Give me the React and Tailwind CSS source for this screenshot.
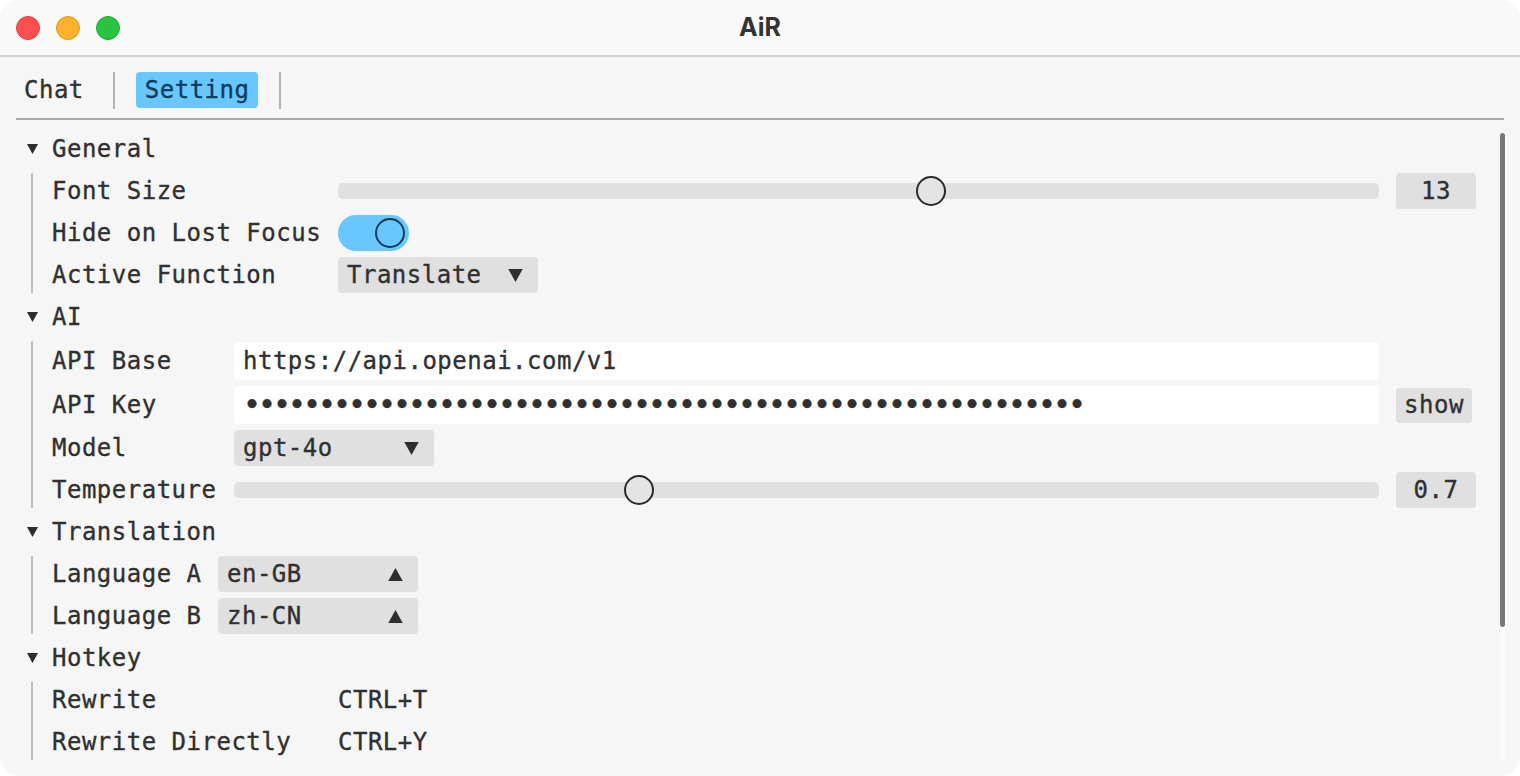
import React from "react";

const MONO = { fontFamily: '"DejaVu Sans Mono", "Liberation Mono", monospace' };

function TriDown({ className = "" }) {
  return (
    <svg viewBox="0 0 10 9" className={className}>
      <polygon points="0,0 10,0 5,9" fill="#2e2e2e" />
    </svg>
  );
}

function TriUp({ className = "" }) {
  return (
    <svg viewBox="0 0 10 9" className={className}>
      <polygon points="0,9 10,9 5,0" fill="#2e2e2e" />
    </svg>
  );
}

function SectionHeader({ title }) {
  return (
    <div className="flex h-[36px] items-center pl-[11px]">
      <TriDown className="w-[11px] h-[10px]" />
      <span className="ml-[14px]">{title}</span>
    </div>
  );
}

function Section({ title, children }) {
  return (
    <div className="flex flex-col gap-[6px]">
      <SectionHeader title={title} />
      <div className="ml-[15px] border-l-2 border-[#bdbdbd] pl-[19px] flex flex-col gap-[6px]">
        {children}
      </div>
    </div>
  );
}

function Row({ label, labelW, h = "h-[36px]", extra = "", children }) {
  return (
    <div className={`flex items-center ${h} ${extra}`}>
      <div className={`shrink-0 ${labelW}`}>{label}</div>
      {children}
    </div>
  );
}

function Slider({ value, min, max }) {
  const pct = (value - min) / (max - min);
  return (
    <div className="relative flex-1 h-[36px] flex items-center">
      <div className="w-full h-[16px] rounded-[5px] bg-[#e0e0e0]" />
      <div
        className="absolute top-[3px] w-[30px] h-[30px] rounded-full border-2 border-[#2a2a2a] bg-[#e4e4e4]"
        style={{ left: `calc((100% - 30px) * ${pct})` }}
      />
    </div>
  );
}

function ValueBox({ children }) {
  return (
    <div className="ml-[17px] w-[80px] h-[36px] shrink-0 rounded-[4px] bg-[#e0e0e0] flex items-center justify-center">
      {children}
    </div>
  );
}

function Dropdown({ text, up }) {
  return (
    <div className="w-[200px] h-[36px] rounded-[4px] bg-[#e0e0e0] flex items-center justify-between pl-[9px] pr-[14px]">
      <span>{text}</span>
      {up ? <TriUp className="w-[17px] h-[13px]" /> : <TriDown className="w-[17px] h-[13px]" />}
    </div>
  );
}

export default function App() {
  const dots = "•".repeat(56);
  return (
    <div className="w-[1520px] h-[776px] bg-white">
      <div className="w-full h-full rounded-[20px] overflow-hidden bg-[#f6f6f6] flex flex-col text-[#303030]">
        {/* title bar */}
        <div className="relative h-[57px] shrink-0 bg-[#f9f9f9] border-b-2 border-[#d2d2d2] flex items-center">
          <div className="flex items-center gap-[16px] pl-[16px]">
            <div className="w-[24px] h-[24px] rounded-full bg-[#fe4f4f] border border-[#e2403f]" />
            <div className="w-[24px] h-[24px] rounded-full bg-[#feb12a] border border-[#df9a22]" />
            <div className="w-[24px] h-[24px] rounded-full bg-[#29c33f] border border-[#20a834]" />
          </div>
          <div
            className="absolute inset-0 flex items-center justify-center text-[25px] font-bold text-[#333]"
            style={{ fontFamily: "Inter, 'Noto Sans', sans-serif" }}
          >
            AiR
          </div>
        </div>

        <div
          className="flex-1 flex flex-col text-[24px] tracking-[0.5px] [-webkit-text-stroke:0.35px_#303030]"
          style={MONO}
        >
          {/* tabs */}
          <div className="flex items-center gap-[21px] pl-[16px] mt-[15px] h-[36px]">
            <div className="h-[36px] px-[8px] flex items-center rounded-[4px]">Chat</div>
            <div className="w-[2px] h-[37px] bg-[#b3b3b3]" />
            <div className="h-[36px] px-[9px] flex items-center rounded-[4px] bg-[#69c7ff] text-[#0c3c5c] [-webkit-text-stroke:0.35px_#0c3c5c]">
              Setting
            </div>
            <div className="w-[2px] h-[37px] bg-[#b3b3b3]" />
          </div>
          <div className="mt-[10px] ml-[16px] w-[1488px] h-[2px] bg-[#aaaaaa]" />

          {/* settings scroll area */}
          <div className="flex-1 flex pl-[16px] pt-[11px] overflow-hidden">
            <div className="w-[1460px] flex flex-col gap-[6px]">
              <Section title="General">
                <Row label="Font Size" labelW="w-[286px]">
                  <Slider value={13} min={9} max={16} />
                  <ValueBox>13</ValueBox>
                </Row>
                <Row label="Hide on Lost Focus" labelW="w-[286px]">
                  <div className="w-[71px] h-[36px] rounded-full bg-[#69c7ff] flex items-center justify-end pr-[4px]">
                    <div className="w-[30px] h-[30px] rounded-full border-2 border-[#0c3c5c] bg-[#69c7ff]" />
                  </div>
                </Row>
                <Row label="Active Function" labelW="w-[286px]">
                  <Dropdown text="Translate" />
                </Row>
              </Section>

              <Section title="AI">
                <Row label="API Base" labelW="w-[182px]" h="h-[38px]" extra="mt-[1px]">
                  <div className="flex-1 h-[38px] rounded-[4px] bg-white flex items-center pl-[9px]">
                    https://api.openai.com/v1
                  </div>
                  <div className="ml-[17px] w-[80px] shrink-0" />
                </Row>
                <Row label="API Key" labelW="w-[182px]" h="h-[38px]">
                  <div className="flex-1 h-[38px] rounded-[4px] bg-white flex items-center pl-[9px] overflow-hidden whitespace-nowrap">
                    <span className="text-[30px] tracking-[-3.06px] leading-none">{dots}</span>
                  </div>
                  <div className="ml-[17px] w-[80px] shrink-0">
                    <div className="w-[76px] h-[35px] rounded-[4px] bg-[#e0e0e0] flex items-center justify-center">
                      show
                    </div>
                  </div>
                </Row>
                <Row label="Model" labelW="w-[182px]">
                  <Dropdown text="gpt-4o" />
                </Row>
                <Row label="Temperature" labelW="w-[182px]">
                  <Slider value={0.7} min={0} max={2} />
                  <ValueBox>0.7</ValueBox>
                </Row>
              </Section>

              <Section title="Translation">
                <Row label="Language A" labelW="w-[166px]">
                  <Dropdown text="en-GB" up />
                </Row>
                <Row label="Language B" labelW="w-[166px]">
                  <Dropdown text="zh-CN" up />
                </Row>
              </Section>

              <Section title="Hotkey">
                <Row label="Rewrite" labelW="w-[286px]">
                  <span>CTRL+T</span>
                </Row>
                <Row label="Rewrite Directly" labelW="w-[286px]">
                  <span>CTRL+Y</span>
                </Row>
              </Section>
            </div>

            {/* scrollbar */}
            <div className="ml-[24px] mt-[2px] w-[5px] h-[626px] rounded-full bg-[#fbfbfb] flex flex-col">
              <div className="w-full h-[494px] rounded-full bg-[#787878]" />
            </div>
          </div>
        </div>
      </div>
    </div>
  );
}
